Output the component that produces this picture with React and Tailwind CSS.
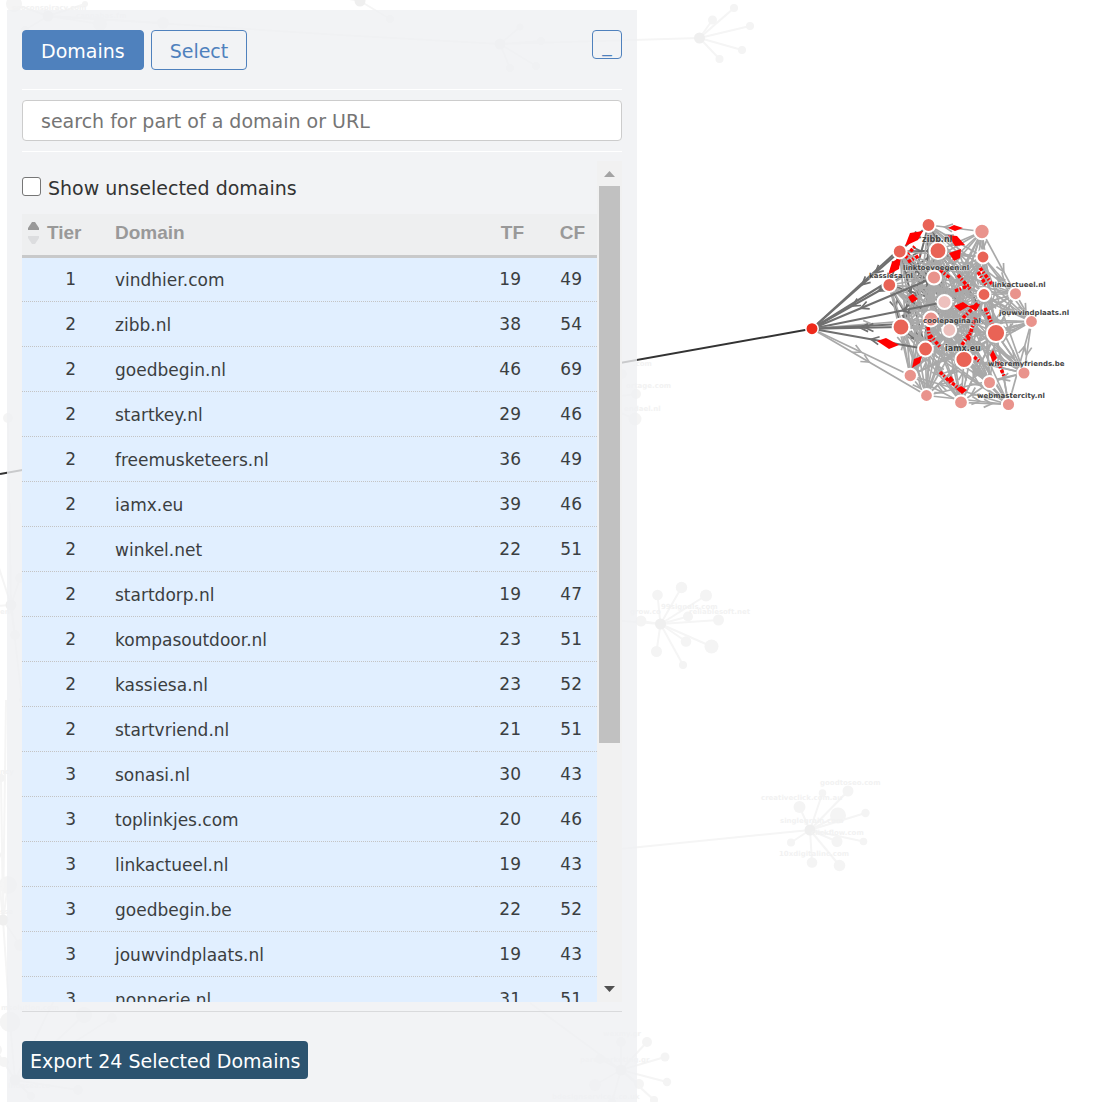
import React, { useState } from 'react';

const domains = [
  { tier: 1, name: 'vindhier.com', tf: 19, cf: 49 },
  { tier: 2, name: 'zibb.nl', tf: 38, cf: 54 },
  { tier: 2, name: 'goedbegin.nl', tf: 46, cf: 69 },
  { tier: 2, name: 'startkey.nl', tf: 29, cf: 46 },
  { tier: 2, name: 'freemusketeers.nl', tf: 36, cf: 49 },
  { tier: 2, name: 'iamx.eu', tf: 39, cf: 46 },
  { tier: 2, name: 'winkel.net', tf: 22, cf: 51 },
  { tier: 2, name: 'startdorp.nl', tf: 19, cf: 47 },
  { tier: 2, name: 'kompasoutdoor.nl', tf: 23, cf: 51 },
  { tier: 2, name: 'kassiesa.nl', tf: 23, cf: 52 },
  { tier: 2, name: 'startvriend.nl', tf: 21, cf: 51 },
  { tier: 3, name: 'sonasi.nl', tf: 30, cf: 43 },
  { tier: 3, name: 'toplinkjes.com', tf: 20, cf: 46 },
  { tier: 3, name: 'linkactueel.nl', tf: 19, cf: 43 },
  { tier: 3, name: 'goedbegin.be', tf: 22, cf: 52 },
  { tier: 3, name: 'jouwvindplaats.nl', tf: 19, cf: 43 },
  { tier: 3, name: 'nonnerie.nl', tf: 31, cf: 51 },
];

const MID = '#e96356';
const LIGHT = '#e9938c';
const PALE = '#edc0bd';
const DARK_EDGE = '#6f6f6f';
const LIGHT_EDGE = '#a9a9a9';

const root = { x: 812, y: 328.7 };

// [x, y, radius, colour]
const nodes = [
  [928.5, 225, 6, MID],
  [899.7, 251.5, 6, MID],
  [938, 250.7, 7.5, MID],
  [889.3, 285, 6, MID],
  [901, 327, 7.5, MID],
  [925.5, 349, 6.5, MID],
  [983, 257, 5.5, MID],
  [984, 294.5, 5.5, MID],
  [996, 333, 8.2, MID],
  [964, 359.5, 7.7, MID],
  [934, 277.5, 6.2, LIGHT],
  [931, 319, 6.5, LIGHT],
  [910.3, 375.5, 5.8, LIGHT],
  [926.5, 395.5, 5.5, LIGHT],
  [982, 231.5, 6.8, LIGHT],
  [1015.5, 293.7, 5.6, LIGHT],
  [1031.5, 321.5, 5.5, LIGHT],
  [1024, 373, 5.6, LIGHT],
  [989.5, 382.5, 5.6, LIGHT],
  [961, 402.3, 6, LIGHT],
  [1008.5, 404.5, 5.7, LIGHT],
  [944.5, 302, 6.2, PALE],
  [949.3, 330, 6, PALE],
];

// edges between the cluster's own nodes, most pairs are linked
const clusterEdges = [];
nodes.forEach((a, i) => {
  nodes.forEach((b, j) => {
    if (j <= i) return;
    const length = Math.hypot(a[0] - b[0], a[1] - b[1]);
    const outer = i >= 12 && j >= 12;
    if ((i * 7 + j * 13) % 10 < (outer ? 5 : 9) && length < 175) {
      const dark = (i < 6 && j < 6) || (i < 4 && j > 20) || (i < 3 && j === 8);
      clusterEdges.push({ a, b, dark, flip: (i + j) % 2 === 0 });
    }
  });
});

const rootEdges = [
  { to: [899.7, 251.5], dark: true, arrows: [0.72, 0.57] },
  { to: [894, 254], dark: true, arrows: [] },
  { to: [889.3, 285], dark: true, arrows: [0.86, 0.52] },
  { to: [889, 281], dark: true, arrows: [] },
  { to: [934, 277.5], dark: true, arrows: [0.4] },
  { to: [944.5, 302], dark: true, arrows: [0.68] },
  { to: [931, 319], dark: false, arrows: [-0.5] },
  { to: [901, 327], dark: true, arrows: [0.6, 0.54] },
  { to: [901, 324], dark: true, arrows: [] },
  { to: [925.5, 349], dark: true, arrows: [0.52] },
  { to: [910.3, 375.5], dark: false, arrows: [-0.5] },
  { to: [926.5, 395.5], dark: false, arrows: [-0.5] },
];

const redShapes = [
  '905,246 910,233 923,231 918,240',
  '888,275 892,262 901,257 899,269',
  '877,341 886,338 899,345 889,349',
  '948,228 954,225 963,228 955,231',
  '948,235 957,236 965,245 955,246',
  '949,253 961,249 960,258 954,261',
  '954,306 963,302 969,306 960,311',
  '967,306 980,304 976,311',
  '908,297 913,294 918,299 912,303',
  '912,368 914,359 922,356 920,363',
  '990,355 993,350 997,358 993,363',
  '956,389 961,386 967,390 962,394',
  '946,380 951,376 954,380 951,383',
];

const redDashes = [
  [980, 268, 992, 284],
  [978, 272, 986, 285],
  [985, 308, 994, 328],
  [968, 340, 976, 316],
  [962, 345, 972, 330],
  [928, 327, 930, 342],
  [930, 335, 940, 347],
  [958, 275, 970, 289],
  [940, 270, 950, 278],
  [955, 291, 970, 285],
  [963, 318, 978, 303],
  [998, 362, 1004, 376],
  [940, 372, 952, 384],
  [952, 383, 962, 391],
  [905, 258, 915, 246],
  [908, 262, 920, 255],
  [974, 357, 979, 361],
];

const labels = [
  [922, 242, 'zibb.nl', true],
  [903, 270, 'linktoevoegen.nl', false],
  [869, 278, 'kassiesa.nl', false],
  [992, 287, 'linkactueel.nl', false],
  [999, 315, 'jouwvindplaats.nl', false],
  [923, 323, 'coolepagina.nl', false],
  [945, 351, 'iamx.eu', true],
  [988, 366, 'wheremyfriends.be', false],
  [977, 398, 'webmastercity.nl', false],
];

// unselected clusters that stay faded in the background
const fadedClusters = [
  {
    hub: [699.5, 38],
    leaves: [[712.5, 20, 4.5], [734, 8, 4], [750, 26, 4], [742, 50, 4], [719.5, 59, 4]],
    tail: [500, 44],
    labels: [],
  },
  {
    hub: [500, 44],
    leaves: [[520, 27, 3.5], [541, 41, 4], [536, 66, 4], [510, 68, 4]],
    tail: [340, 35],
    labels: [],
  },
  {
    hub: [360, 1],
    leaves: [[390, 19, 4]],
    tail: [250, -20],
    labels: [],
  },
  {
    hub: [48, 16],
    leaves: [[14, 4, 8], [100, 24, 7], [25, 30, 4], [163, 23, 6], [85, 4, 3]],
    tail: [340, 35],
    labels: [[12, 10, 'seoconspiracy.com'], [76, 18, 'cannabas.fm']],
  },
  {
    hub: [660.5, 624],
    leaves: [
      [657.5, 595, 5.3], [681.5, 587.5, 5.7], [706, 595.5, 6], [688, 616.5, 5],
      [718.5, 620, 5.5], [711.5, 646.5, 7], [686, 641.5, 5.3], [683, 665, 4],
      [656.5, 651.5, 5.5], [641, 621, 5.5],
    ],
    tail: [560, 616],
    labels: [[661, 609, '99signals.com'], [689, 614, 'reliablesoft.net'], [630, 614, 'grow.co']],
  },
  {
    hub: [810, 830],
    leaves: [
      [799.5, 807, 6], [822.5, 793, 3.8], [848, 791, 5.5], [838, 815.5, 8],
      [865.5, 813, 4.2], [863.5, 841.5, 3.8], [837, 841.5, 5.5], [839.5, 865.5, 5.8],
      [812, 862.5, 5.3], [791, 842.5, 4],
    ],
    tail: [600, 851],
    labels: [
      [820, 785, 'goodtoseo.com'], [761, 800, 'creativeclick.com.au'],
      [780, 823, 'singlegrain.com'], [811, 835, 'clickflow.com'], [779, 856, '10xdigitalinc.com'],
    ],
  },
  {
    hub: [621, 1070],
    leaves: [
      [621, 1042, 5], [647, 1042, 5], [665, 1057, 4.5], [667, 1082, 4.2], [639, 1084, 5],
      [654, 1100, 4], [595, 1085, 6], [600, 1059, 5], [612, 1102, 4],
    ],
    tail: [530, 1003],
    labels: [[603, 1036, 'wexmy.gr'], [580, 1062, 'paromarketing.gr'], [552, 1099, 'bdesignservices.co.uk']],
  },
  {
    hub: [590, 400],
    leaves: [[622, 374, 5], [636, 394, 5], [635, 419, 6.5]],
    tail: [560, 420],
    labels: [[633, 366, '.com'], [626, 388, 'ortage.com'], [624, 411, 'endael.nl']],
  },
  {
    hub: [11, 605],
    leaves: [[8, 418, 5], [20, 578, 5], [15, 635, 5], [-10, 540, 4], [22, 700, 3]],
    tail: [-5, 606],
    labels: [[0, 614, 'enc']],
  },
  {
    hub: [3, 920],
    leaves: [[8, 885, 9], [1, 778, 4], [10, 1022, 10], [20, 945, 6], [-3, 855, 4]],
    tail: [6, 700],
    labels: [[0, 774, 'ncy'], [0, 914, 'sse'], [1, 1010, 'msolution.com']],
  },
  {
    hub: [15, 1080],
    leaves: [[10, 1022, 10], [84, 1015, 8], [112, 1018, 5], [78, 1090, 5], [31, 1096, 4], [-4, 1050, 6], [4, 1062, 5]],
    tail: [64, 980],
    labels: [[8, 1088, 'indasea.co']],
  },
];

function Chevron({ from, to, at, color }) {
  const t = Math.abs(at);
  const x = from[0] + (to[0] - from[0]) * t;
  const y = from[1] + (to[1] - from[1]) * t;
  const turn = at < 0 ? 0 : 180;
  const angle = (Math.atan2(to[1] - from[1], to[0] - from[0]) * 180) / Math.PI + turn;
  return (
    <path
      d="M-8 -4 L0 0 L-8 4"
      fill="none"
      stroke={color}
      strokeWidth="1.7"
      transform={`translate(${x} ${y}) rotate(${angle})`}
    />
  );
}

function FadedCluster({ cluster }) {
  const { hub, leaves, tail } = cluster;
  return (
    <g>
      <line x1={hub[0]} y1={hub[1]} x2={tail[0]} y2={tail[1]} stroke="#f5f5f5" strokeWidth="2" />
      {leaves.map(([x, y, r]) => (
        <g key={`${x}-${y}`}>
          <line x1={hub[0]} y1={hub[1]} x2={x} y2={y} stroke="#f5f5f5" strokeWidth="2" />
          <circle cx={x} cy={y} r={r} fill="#f4f4f4" />
        </g>
      ))}
      <circle cx={hub[0]} cy={hub[1]} r="5.5" fill="#efefef" />
      {cluster.labels.map(([x, y, text]) => (
        <text key={text} x={x} y={y} fill="#f2f2f2" className="text-[7px] font-bold">
          {text}
        </text>
      ))}
    </g>
  );
}

function LinkGraph() {
  return (
    <svg
      className="absolute left-0 top-0 font-['DejaVu_Sans',sans-serif]"
      width="1102"
      height="1102"
      viewBox="0 0 1102 1102"
      role="img"
      aria-label="Link graph"
    >
      {fadedClusters.map((cluster) => (
        <FadedCluster key={cluster.hub.join()} cluster={cluster} />
      ))}

      <line x1="0" y1="474" x2={root.x} y2={root.y} stroke="#333" strokeWidth="2" />

      {clusterEdges.filter((e) => e.dark).map(({ a, b }) => (
        <g key={`${a}-${b}`}>
          <line x1={a[0]} y1={a[1]} x2={b[0]} y2={b[1]} stroke={DARK_EDGE} strokeWidth="2" />
          <Chevron from={a} to={b} at={-0.55} color={DARK_EDGE} />
        </g>
      ))}
      {clusterEdges.filter((e) => !e.dark).map(({ a, b, flip }) => (
        <g key={`${a}-${b}`}>
          <line x1={a[0]} y1={a[1]} x2={b[0]} y2={b[1]} stroke={LIGHT_EDGE} strokeWidth="1.7" />
          <Chevron from={a} to={b} at={flip ? 0.3 : -0.65} color={LIGHT_EDGE} />
        </g>
      ))}
      {rootEdges.map(({ to, dark, arrows }) => {
        const color = dark ? DARK_EDGE : LIGHT_EDGE;
        return (
          <g key={to.join()}>
            <line x1={root.x} y1={root.y} x2={to[0]} y2={to[1]} stroke={color} strokeWidth={dark ? 2.1 : 1.7} />
            {arrows.map((at) => (
              <Chevron key={at} from={[root.x, root.y]} to={to} at={at} color={color} />
            ))}
          </g>
        );
      })}

      {redDashes.map(([x1, y1, x2, y2]) => (
        <line
          key={`${x1}-${y1}`}
          x1={x1}
          y1={y1}
          x2={x2}
          y2={y2}
          stroke="#f00"
          strokeWidth="3.5"
          strokeDasharray="3.5 1.5 1.5 2"
        />
      ))}
      {redShapes.map((points) => (
        <polygon key={points} points={points} fill="#f00" />
      ))}

      <circle cx={root.x} cy={root.y} r="6.2" fill="#ee2a1b" stroke="#fff" strokeWidth="1.5" />
      {nodes.map(([x, y, r, fill]) => (
        <circle key={`${x}-${y}`} cx={x} cy={y} r={r + 0.9} fill={fill} stroke="#fff" strokeWidth="2" />
      ))}

      {labels.map(([x, y, text, big]) => (
        <text
          key={text}
          x={x}
          y={y}
          fill="#444"
          stroke="#fff"
          strokeOpacity="0.35"
          strokeWidth="1.5"
          paintOrder="stroke"
          className={big ? 'text-[8px] font-bold' : 'text-[7px] font-bold'}
        >
          {text}
        </text>
      ))}
    </svg>
  );
}

function ScrollTrack() {
  return (
    <div className="flex w-[25px] shrink-0 flex-col items-center bg-[#f1f1f1]" aria-hidden="true">
      <svg className="h-[25px] w-[11px] shrink-0" viewBox="0 0 11 25">
        <path d="M0 16 L5.5 10 L11 16 Z" fill="#a3a3a3" />
      </svg>
      <div className="w-[21px] grow-[557] bg-[#c1c1c1]" />
      <div className="grow-[234]" />
      <svg className="h-[25px] w-[11px] shrink-0" viewBox="0 0 11 25">
        <path d="M0 9 L5.5 15 L11 9 Z" fill="#505050" />
      </svg>
    </div>
  );
}

function DomainTable({ rows }) {
  return (
    <table className="w-full table-fixed border-collapse text-[17px] text-[#3b3e41]">
      <colgroup>
        <col className="w-[69px]" />
        <col />
        <col className="w-[60px]" />
        <col className="w-[61px]" />
      </colgroup>
      <thead>
        <tr className="h-[42px] border-b-3 border-[#c8c9ca] bg-[#eeeff0] font-['Liberation_Sans',sans-serif] text-[19px] text-[#999]">
          <th scope="col" className="px-0 pt-0 pb-0.5">
            <div className="flex items-center gap-2 pl-1.5">
              <svg width="11" height="24" viewBox="0 0 11 24">
                <path d="M0 9 V7 L4 1 H7 L11 7 V9 Z" fill="#999" />
                <path d="M0 15 H11 V17 L7 23 H4 L0 17 Z" fill="#dcdddf" />
              </svg>
              Tier
            </div>
          </th>
          <th scope="col" className="pt-0 pr-0 pb-0.5 pl-6 text-left">Domain</th>
          <th scope="col" className="pt-0 pr-3 pb-0.5 pl-0 text-right">TF</th>
          <th scope="col" className="pt-0 pr-3 pb-0.5 pl-0 text-right">CF</th>
        </tr>
      </thead>
      <tbody>
        {rows.map((row) => (
          <tr key={row.name} className="h-[45px] border-b border-dotted border-[#c4c4c4] bg-[#e1efff]">
            <td className="pt-0.5 pr-[15px] pb-0 pl-0 text-right">{row.tier}</td>
            <td className="pt-1 pr-0 pb-0 pl-6">{row.name}</td>
            <td className="pt-0.5 pr-[15px] pb-0 pl-0 text-right">{row.tf}</td>
            <td className="pt-0.5 pr-[15px] pb-0 pl-0 text-right">{row.cf}</td>
          </tr>
        ))}
      </tbody>
    </table>
  );
}

function App() {
  const [search, setSearch] = useState('');
  const [showUnselected, setShowUnselected] = useState(false);
  const rows = domains.filter((row) => row.name.includes(search.toLowerCase()));

  return (
    <main className="relative h-screen overflow-hidden bg-white pt-2.5 pl-[7px] font-['DejaVu_Sans',sans-serif] text-[19px] text-[#333]">
      <LinkGraph />
      <section className="relative flex h-full w-[630px] max-w-full flex-col bg-[#eff0f2]/80 px-[15px] pt-5 pb-[23px]">
        <div className="mb-[19px] flex items-start gap-[7px]">
          <button type="button" className="h-10 rounded border border-[#4f81bd] bg-[#4f81bd] px-[18px] pt-0.5 text-white">
            Domains
          </button>
          <button type="button" className="h-10 rounded border border-[#4f81bd] px-[18px] pt-0.5 text-[#4f81bd]">
            Select
          </button>
          <button
            type="button"
            aria-label="Minimize"
            className="ml-auto h-[29px] w-[30px] rounded border border-[#4f81bd] leading-6 text-[#4f81bd]"
          >
            _
          </button>
        </div>
        <hr className="border-white" />
        <input
          type="text"
          aria-label="Search domains"
          placeholder="search for part of a domain or URL"
          value={search}
          onChange={(e) => setSearch(e.target.value)}
          className="my-2.5 h-[41px] w-full shrink-0 rounded border border-[#ccc] bg-white px-[18px] placeholder:text-[#757575]"
        />
        <hr className="border-white" />

        <div className="my-[9px] flex min-h-0 flex-1">
          <div className="min-w-0 flex-1 overflow-y-auto [scrollbar-width:none]">
            <label className="flex h-[53px] items-center gap-[7px] pt-0.5">
              <input
                type="checkbox"
                checked={showUnselected}
                onChange={(e) => setShowUnselected(e.target.checked)}
                className="mb-1 size-[19px] appearance-none rounded-[3px] border border-[#767676] bg-white checked:bg-[#4f81bd]"
              />
              Show unselected domains
            </label>
            <DomainTable rows={rows} />
          </div>
          <ScrollTrack />
        </div>

        <hr className="mb-[29px] border-[#d9dadc]" />
        <button type="button" className="h-[38px] shrink-0 self-start rounded bg-[#2c536f] px-2 pt-0.5 text-white">
          Export 24 Selected Domains
        </button>
      </section>
    </main>
  );
}

export default App;
